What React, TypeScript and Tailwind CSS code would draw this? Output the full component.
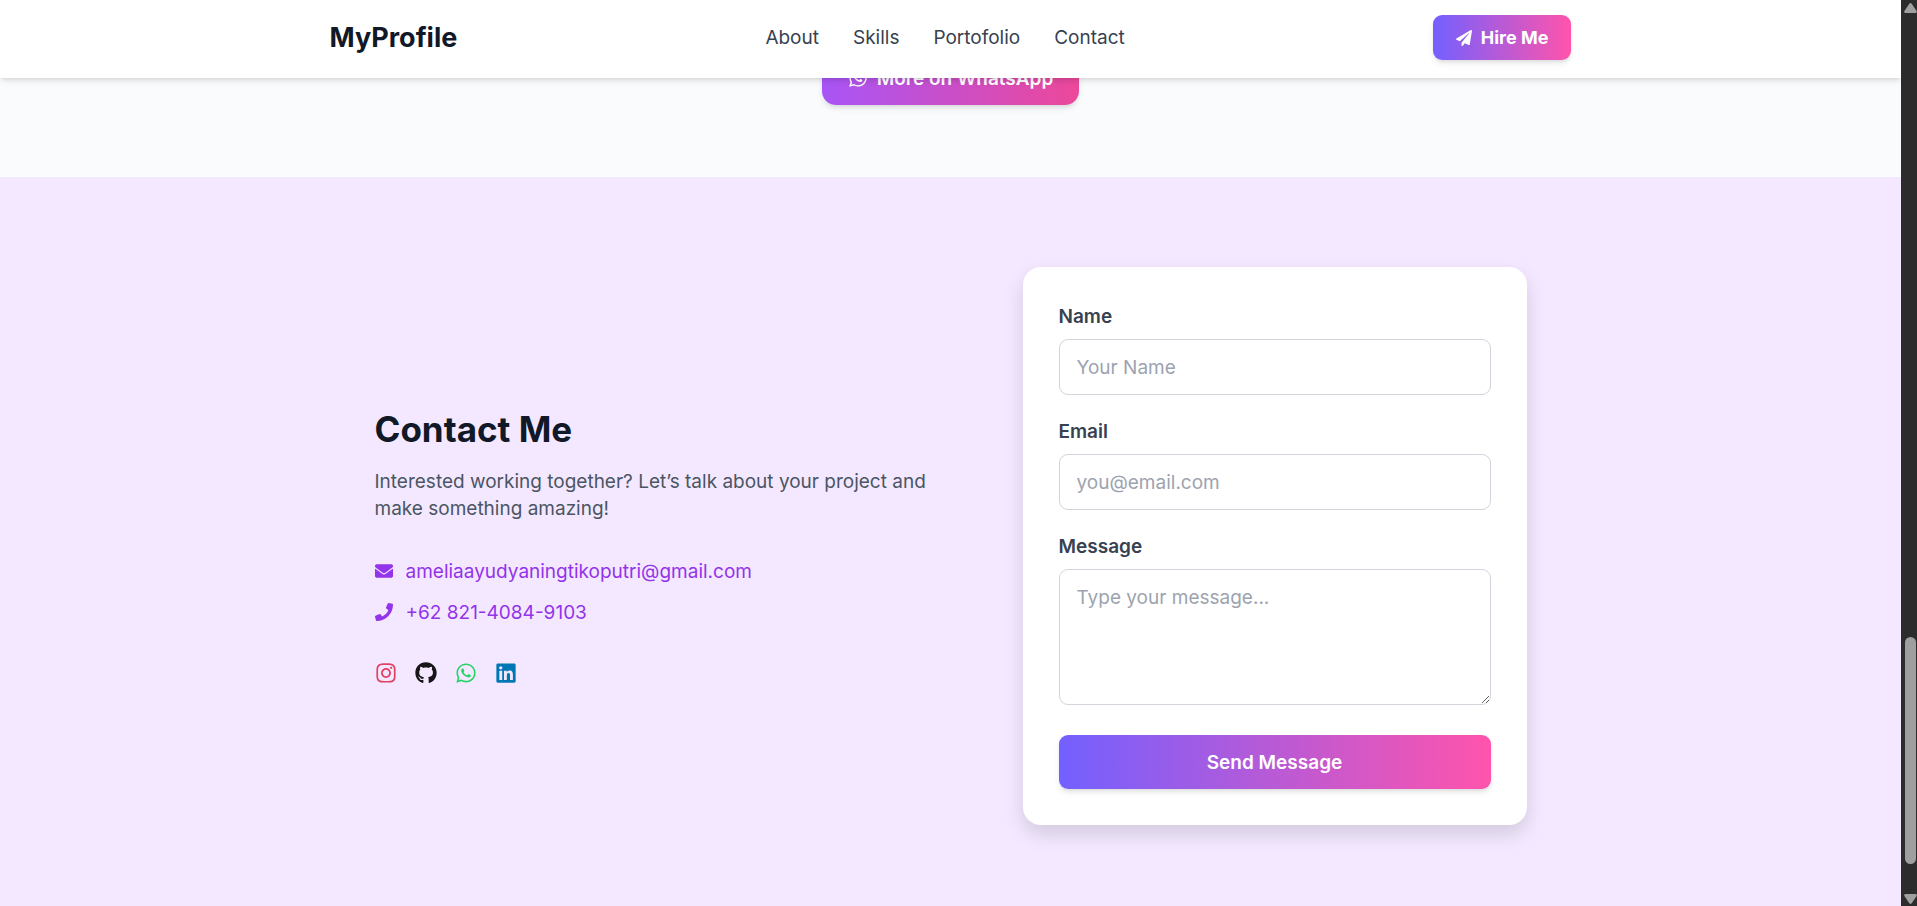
import type { ReactNode } from 'react';
import {
  FaEnvelope,
  FaGithub,
  FaInstagram,
  FaLinkedin,
  FaPaperPlane,
  FaPhone,
  FaWhatsapp,
} from 'react-icons/fa';

const navItems = ['About', 'Skills', 'Portofolio', 'Contact'];

const socials = [
  { label: 'Instagram', icon: <FaInstagram />, color: 'text-[#e4405f]' },
  { label: 'GitHub', icon: <FaGithub />, color: 'text-[#171515]' },
  { label: 'WhatsApp', icon: <FaWhatsapp />, color: 'text-[#25d366]' },
  { label: 'LinkedIn', icon: <FaLinkedin />, color: 'text-[#0077b5]' },
];

function Header() {
  return (
    <header className="absolute inset-x-0 top-0 z-10 bg-white pt-[15px] pb-[18px] shadow-md">
      <div className="mx-auto flex max-w-7xl items-center justify-between px-[19px]">
        <a href="#home" className="text-[27px] leading-9 font-bold text-[#111827]">
          MyProfile
        </a>
        <nav className="flex gap-[34px] text-[#374151]">
          {navItems.map((item) => (
            <a key={item} href={`#${item.toLowerCase()}`}>
              {item}
            </a>
          ))}
        </nav>
        <button
          type="button"
          className="flex h-[45px] items-center gap-[9px] rounded-[9px] bg-linear-to-r/srgb from-[#7360ff] to-[#ff54ac] px-[23px] text-[18px] font-bold text-white shadow-md"
        >
          <FaPaperPlane className="size-4" />
          Hire Me
        </button>
      </div>
    </header>
  );
}

function Field({ id, label, children }: { id: string; label: string; children: ReactNode }) {
  return (
    <div className="flex flex-col gap-[9px]">
      <label htmlFor={id} className="font-semibold text-[#374151]">
        {label}
      </label>
      {children}
    </div>
  );
}

function ContactForm() {
  const box =
    'w-full rounded-[9px] border border-[#d1d5db] bg-white px-[17px] placeholder:text-[#9ca3af]';
  return (
    <form className="flex w-[504px] flex-col gap-[23px] rounded-[18px] bg-white p-9 shadow-[0_9px_20px_rgba(0,0,0,0.13)]">
      <Field id="name" label="Name">
        <input id="name" type="text" placeholder="Your Name" className={`${box} h-14`} />
      </Field>
      <Field id="email" label="Email">
        <input id="email" type="email" placeholder="you@email.com" className={`${box} h-14`} />
      </Field>
      <Field id="message" label="Message">
        <textarea
          id="message"
          placeholder="Type your message..."
          className={`${box} block h-[136px] py-[14px]`}
        />
      </Field>
      <button
        type="submit"
        className="mt-[7px] h-[54px] rounded-[9px] bg-linear-to-r/srgb from-[#7360ff] to-[#ff54ac] font-semibold text-white shadow-md"
      >
        Send Message
      </button>
    </form>
  );
}

function Contact() {
  return (
    <section id="contact" className="grow bg-[#f3e8ff] pt-[90px]">
      <div className="mx-auto flex max-w-6xl items-center gap-[72px]">
        <div className="flex-1">
          <h2 className="text-[35px] leading-10 font-bold text-[#111827]">Contact Me</h2>
          <p className="mt-[19px] text-[#4b5563]">
            Interested working together? Let’s talk about your project and make something amazing!
          </p>
          <div className="mt-9 flex flex-col items-start gap-[14px] text-[#9333ea]">
            <a href="mailto:ameliaayudyaningtikoputri@gmail.com" className="flex items-center gap-[13px]">
              <FaEnvelope className="size-[18px]" />
              ameliaayudyaningtikoputri@gmail.com
            </a>
            <a href="tel:+6282140849103" className="flex items-center gap-[13px]">
              <FaPhone className="size-[18px]" />
              +62 821-4084-9103
            </a>
          </div>
          <div className="mt-9 flex gap-[18px] text-[22px]">
            {socials.map(({ label, icon, color }) => (
              <a key={label} href={`#${label.toLowerCase()}`} aria-label={label} className={color}>
                {icon}
              </a>
            ))}
          </div>
        </div>
        <ContactForm />
      </div>
    </section>
  );
}

function Scrollbar() {
  return (
    <div aria-hidden="true" className="flex w-4 shrink-0 flex-col items-end bg-[#2c2c2c] pt-[3px] pb-[2px]">
      <svg viewBox="0 0 13 10" className="h-[10px] w-[13px] fill-[#9f9f9f]">
        <path d="M5.3.8Q6.5-.6 7.7.8L12.6 8Q13.2 10 11.500 10H1.500Q-.2 10 .4 8Z" />
      </svg>
      <div className="grow-624" />
      <div className="mr-px w-[11px] grow-227 rounded-full bg-[#9f9f9f]" />
      <div className="grow-30" />
      <svg viewBox="0 0 13 10" className="h-[10px] w-[13px] fill-[#9f9f9f]">
        <path d="M5.3 9.200Q6.500 10.600 7.700 9.200L12.600 2Q13.200 0 11.500 0H1.500Q-.2 0 .4 2Z" />
      </svg>
    </div>
  );
}

export default function App() {
  return (
    <div className="flex h-screen font-['Inter','Noto_Sans',sans-serif] text-[19px] leading-[27px]">
      <div className="relative flex min-w-0 flex-1 flex-col overflow-hidden bg-[#fafbfd]">
        <Header />
        <section className="flex justify-center pt-[51px] pb-[72px]">
          <a
            href="#whatsapp"
            className="flex h-[54px] items-center gap-[9px] rounded-[14px] bg-linear-to-r/srgb from-[#a855f7] to-[#ec4899] px-[26px] font-semibold text-white shadow-md"
          >
            <FaWhatsapp className="size-5" />
            More on WhatsApp
          </a>
        </section>
        <Contact />
      </div>
      <Scrollbar />
    </div>
  );
}
